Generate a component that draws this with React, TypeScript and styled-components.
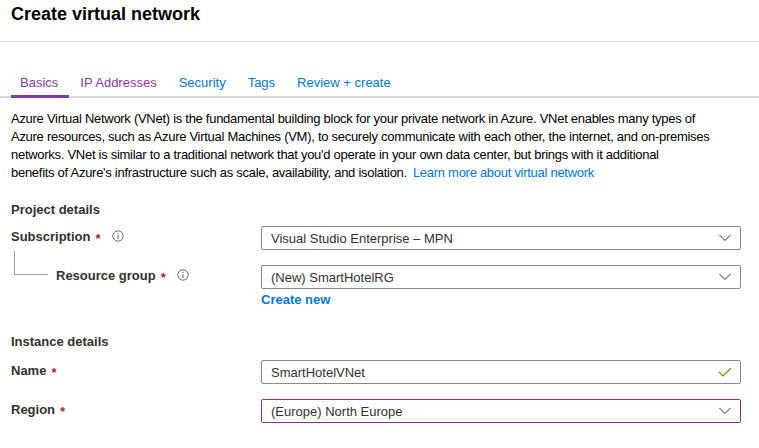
import React from 'react'
import styled, { createGlobalStyle } from 'styled-components'

const GlobalStyle = createGlobalStyle`
  html, body {
    margin: 0;
    padding: 0;
    background: #ffffff;
  }
  body {
    font-family: 'Liberation Sans', Arial, sans-serif;
    color: #323130;
  }
`

const Page = styled.div`
  width: 759px;
  height: 448px;
  overflow: hidden;
  background: #ffffff;
`

const Header = styled.header`
  height: 42px;
  border-bottom: 1px solid #d6d6d6;
  padding: 0 11px;
  box-sizing: border-box;
`

const Title = styled.h1`
  margin: 0;
  padding-top: 3px;
  font-size: 18px;
  font-weight: 600;
  color: #000000;
  line-height: 22px;
`

const TabBar = styled.nav`
  display: flex;
  gap: 2px;
  margin-top: 30px;
  padding: 0 11px;
  border-bottom: 2px solid #d9d9d9;
`

const Tab = styled.a<{ $active?: boolean; $visited?: boolean }>`
  display: block;
  padding: 2px 11px 3px 9px;
  font-size: 13px;
  line-height: 18px;
  color: ${(p) => (p.$visited ? '#8a3a9f' : '#0078d4')};
  border-bottom: 3px solid ${(p) => (p.$active ? '#8a3a9f' : 'transparent')};
  margin-bottom: -2px;
  cursor: pointer;
`

const Content = styled.main`
  padding: 12px 11px 0;
`

const Intro = styled.p`
  margin: 0;
  font-size: 13px;
  line-height: 18px;
  letter-spacing: -0.28px;
  color: #000000;
  white-space: nowrap;
`

const Link = styled.a`
  color: #0078d4;
  margin-left: 6px;
  cursor: pointer;
`

const SectionTitle = styled.h2<{ $gap: number }>`
  margin: ${(p) => p.$gap}px 0 0;
  font-size: 13px;
  font-weight: 600;
  line-height: 18px;
  color: #323130;
`

const FormRow = styled.div<{ $top: number }>`
  display: grid;
  grid-template-columns: 250px 480px;
  align-items: start;
  margin-top: ${(p) => p.$top}px;
`

const LabelCell = styled.div<{ $indent?: boolean }>`
  display: flex;
  align-items: center;
  height: 20px;
  padding-left: ${(p) => (p.$indent ? '45px' : '0')};
  position: relative;
`

const Connector = styled.span`
  position: absolute;
  left: 3px;
  top: -14px;
  width: 33px;
  height: 23px;
  border-left: 1px solid #a19f9d;
  border-bottom: 1px solid #a19f9d;
`

const Label = styled.label`
  font-size: 13px;
  font-weight: 600;
  color: #323130;
`

const Required = styled.span`
  color: #a4262c;
  margin-left: 5px;
  font-size: 13px;
  font-weight: 600;
  position: relative;
  top: 2px;
`

const InfoIcon = styled.span`
  display: inline-flex;
  margin-left: 11px;
  color: #605e5c;
`

const ControlCell = styled.div`
  display: flex;
  flex-direction: column;
`

const Field = styled.div<{ $focused?: boolean }>`
  display: flex;
  align-items: center;
  justify-content: space-between;
  height: 24px;
  box-sizing: border-box;
  border: 1px solid ${(p) => (p.$focused ? '#8a2da5' : '#8a8886')};
  border-radius: 2px;
  padding: 0 8px 0 9px;
  font-size: 13px;
  color: #323130;
  background: #ffffff;
`

const CreateNew = styled.a`
  margin-top: 3px;
  font-size: 13px;
  font-weight: 600;
  line-height: 16px;
  color: #0078d4;
  cursor: pointer;
`

const Info = () => (
  <InfoIcon>
    <svg width="12" height="12" viewBox="0 0 12 12" fill="none">
      <circle cx="6" cy="6" r="5.2" stroke="currentColor" strokeWidth="0.9" />
      <line x1="6" y1="5" x2="6" y2="9" stroke="currentColor" strokeWidth="1" />
      <circle cx="6" cy="3.4" r="0.6" fill="currentColor" />
    </svg>
  </InfoIcon>
)

const Chevron = () => (
  <svg width="14" height="8" viewBox="0 0 14 8" fill="none">
    <path d="M1.5 1l5.5 5.5 5.5-5.5" stroke="#323130" strokeWidth="1" />
  </svg>
)

const Check = () => (
  <svg width="14" height="10" viewBox="0 0 14 10" fill="none">
    <path d="M1 5l4 4 8-8" stroke="#57a300" strokeWidth="1.1" />
  </svg>
)

const tabs = [
  { label: 'Basics', active: true, visited: true },
  { label: 'IP Addresses', visited: true },
  { label: 'Security' },
  { label: 'Tags' },
  { label: 'Review + create' },
]

export default function App() {
  return (
    <Page>
      <GlobalStyle />
      <Header>
        <Title>Create virtual network</Title>
      </Header>

      <TabBar>
        {tabs.map((t) => (
          <Tab key={t.label} $active={t.active} $visited={t.visited}>
            {t.label}
          </Tab>
        ))}
      </TabBar>

      <Content>
        <Intro>
          Azure Virtual Network (VNet) is the fundamental building block for your private network in Azure. VNet enables many types of
          <br />
          Azure resources, such as Azure Virtual Machines (VM), to securely communicate with each other, the internet, and on-premises
          <br />
          networks. VNet is similar to a traditional network that you'd operate in your own data center, but brings with it additional
          <br />
          benefits of Azure's infrastructure such as scale, availability, and isolation.
          <Link>Learn more about virtual network</Link>
        </Intro>

        <SectionTitle $gap={19}>Project details</SectionTitle>

        <FormRow $top={7}>
          <LabelCell>
            <Label>Subscription</Label>
            <Required>*</Required>
            <Info />
          </LabelCell>
          <ControlCell>
            <Field>
              <span>Visual Studio Enterprise – MPN</span>
              <Chevron />
            </Field>
          </ControlCell>
        </FormRow>

        <FormRow $top={15}>
          <LabelCell $indent>
            <Connector />
            <Label>Resource group</Label>
            <Required>*</Required>
            <Info />
          </LabelCell>
          <ControlCell>
            <Field>
              <span>(New) SmartHotelRG</span>
              <Chevron />
            </Field>
            <CreateNew>Create new</CreateNew>
          </ControlCell>
        </FormRow>

        <SectionTitle $gap={25}>Instance details</SectionTitle>

        <FormRow $top={9}>
          <LabelCell>
            <Label>Name</Label>
            <Required>*</Required>
          </LabelCell>
          <ControlCell>
            <Field>
              <span>SmartHotelVNet</span>
              <Check />
            </Field>
          </ControlCell>
        </FormRow>

        <FormRow $top={15}>
          <LabelCell>
            <Label>Region</Label>
            <Required>*</Required>
          </LabelCell>
          <ControlCell>
            <Field $focused>
              <span>(Europe) North Europe</span>
              <Chevron />
            </Field>
          </ControlCell>
        </FormRow>
      </Content>
    </Page>
  )
}
